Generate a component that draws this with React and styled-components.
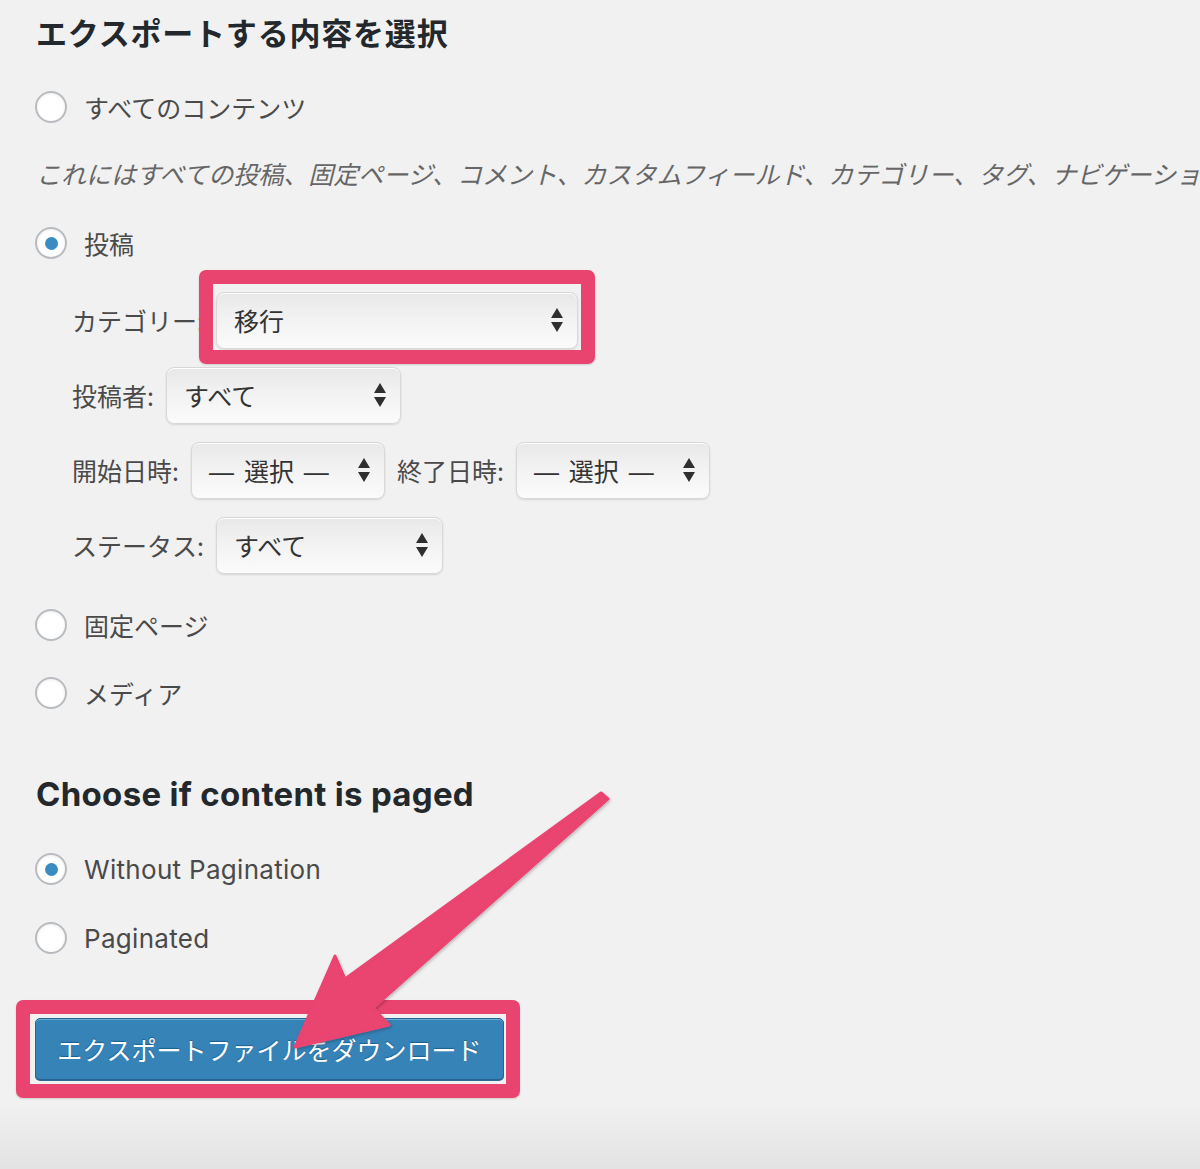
import React from "react";
import styled, { createGlobalStyle } from "styled-components";

const Global = createGlobalStyle`
  html, body { margin: 0; padding: 0; }
  body { background: #f1f1f1; }
`;

const CJK = `"Noto Sans CJK JP", "Noto Sans", sans-serif`;
const LATIN = `Inter, "Noto Sans CJK JP", sans-serif`;

const Page = styled.div`
  position: relative;
  box-sizing: border-box;
  min-height: 1169px;
  width: 1200px;
  overflow: hidden;
  padding: 12px 0 0 35px;
  background: linear-gradient(to bottom, #f1f1f1 0, #f1f1f1 1105px, #e3e3e3 1169px);
  font-family: ${CJK};
  color: #444;
`;

const Title = styled.h2`
  margin: 0 0 0 1px;
  font-family: ${(p) => (p.$latin ? LATIN : CJK)};
  font-size: ${(p) => (p.$latin ? 33 : 31)}px;
  line-height: 40px;
  height: 40px;
  font-weight: 700;
  color: #23282d;
  margin-top: ${(p) => p.$mt || 0}px;
  letter-spacing: ${(p) => (p.$latin ? "0.3px" : "0.8px")};
`;

const RadioRow = styled.label`
  display: flex;
  align-items: center;
  gap: 17px;
  height: 40px;
  margin-top: ${(p) => p.$mt}px;
  font-family: ${(p) => (p.$latin ? LATIN : CJK)};
  font-size: ${(p) => (p.$latin ? 26 : 25)}px;
  letter-spacing: ${(p) => (p.$latin ? "0.3px" : "0")};
  color: #4a4a4a;
`;

const Radio = styled.span`
  box-sizing: border-box;
  width: 32px;
  height: 32px;
  flex: none;
  border-radius: 50%;
  border: 2px solid #b8bcc0;
  background: #fff;
  box-shadow: inset 0 1px 3px rgba(0, 0, 0, 0.08);
  display: flex;
  align-items: center;
  justify-content: center;
  &::after {
    content: "";
    width: 13px;
    height: 13px;
    border-radius: 50%;
    background: #3a8bc2;
    display: ${(p) => (p.$checked ? "block" : "none")};
  }
`;

const Desc = styled.p`
  margin: 26px 0 0 1px;
  height: 40px;
  line-height: 40px;
  font-size: 25px;
  font-style: italic;
  color: #666;
  white-space: nowrap;
`;

const FilterList = styled.div`
  display: flex;
  flex-direction: column;
  gap: 17px;
  margin: 28px 0 0 37px;
`;

const FilterRow = styled.div`
  display: flex;
  align-items: center;
  gap: 12px;
  height: 58px;
`;

const FilterLabel = styled.span`
  font-size: 25px;
  color: #4a4a4a;
  white-space: nowrap;
`;

const Highlight = styled.div`
  position: relative;
  display: inline-flex;
  &::after {
    content: "";
    position: absolute;
    top: ${(p) => p.$t}px;
    bottom: ${(p) => p.$b}px;
    left: ${(p) => p.$l}px;
    right: ${(p) => p.$r}px;
    border: 14px solid #e9446f;
    border-radius: 7px;
    box-shadow: 0 1px 2px rgba(0, 0, 0, 0.15);
    pointer-events: none;
  }
`;

const SelectBox = styled.div`
  box-sizing: border-box;
  width: ${(p) => p.$w}px;
  height: 57px;
  display: flex;
  align-items: center;
  justify-content: space-between;
  padding: 0 14px 0 17px;
  border: 1px solid #d8d8d8;
  border-radius: 8px;
  background: linear-gradient(to bottom, #e8e8e8 0%, #f2f2f2 45%, #fbfbfb 100%);
  box-shadow: 0 1px 2px rgba(0, 0, 0, 0.12), inset 0 1px 0 #fff;
  font-family: "Liberation Sans", "Noto Sans CJK JP", sans-serif;
  font-size: 25px;
  word-spacing: 3px;
  color: #333;
  white-space: nowrap;
`;

const Arrows = () => (
  <svg width="12" height="24" viewBox="0 0 12 24" aria-hidden="true">
    <polygon points="0,10 6,0 12,10" fill="#2f2f2f" />
    <polygon points="0,14 12,14 6,24" fill="#2f2f2f" />
  </svg>
);

const Select = ({ w, value }) => (
  <SelectBox $w={w}>
    <span>{value}</span>
    <Arrows />
  </SelectBox>
);

const ButtonWrap = styled.div`
  margin-top: 60px;
  display: flex;
`;

const Button = styled.button`
  box-sizing: border-box;
  width: 469px;
  height: 62px;
  border: 1px solid #27648f;
  border-radius: 5px;
  background: #3683b8;
  box-shadow: inset 0 1px 0 rgba(140, 200, 235, 0.6), 0 1px 0 #2a6a96;
  color: #fff;
  font-family: ${CJK};
  font-size: 25px;
  text-shadow: 0 -1px 1px rgba(0, 60, 100, 0.5);
  padding: 0;
  cursor: pointer;
`;

const ArrowLayer = styled.svg`
  position: absolute;
  left: 0;
  top: 0;
  pointer-events: none;
`;

export default function App() {
  return (
    <Page>
      <Global />
      <Title>エクスポートする内容を選択</Title>

      <RadioRow $mt={35}>
        <Radio />
        すべてのコンテンツ
      </RadioRow>
      <Desc>
        これにはすべての投稿、固定ページ、コメント、カスタムフィールド、カテゴリー、タグ、ナビゲーションメニュー、カスタム投稿が含まれます。
      </Desc>

      <RadioRow $mt={30}>
        <Radio $checked />
        投稿
      </RadioRow>

      <FilterList>
        <FilterRow>
          <FilterLabel>カテゴリー:</FilterLabel>
          <Highlight $t={-22} $b={-15} $l={-17} $r={-17}>
            <Select w={362} value="移行" />
          </Highlight>
        </FilterRow>
        <FilterRow>
          <FilterLabel>投稿者:</FilterLabel>
          <Select w={235} value="すべて" />
        </FilterRow>
        <FilterRow>
          <FilterLabel>開始日時:</FilterLabel>
          <Select w={194} value="— 選択 —" />
          <FilterLabel>終了日時:</FilterLabel>
          <Select w={194} value="— 選択 —" />
        </FilterRow>
        <FilterRow>
          <FilterLabel>ステータス:</FilterLabel>
          <Select w={227} value="すべて" />
        </FilterRow>
      </FilterList>

      <RadioRow $mt={31}>
        <Radio />
        固定ページ
      </RadioRow>
      <RadioRow $mt={28}>
        <Radio />
        メディア
      </RadioRow>

      <Title $latin $mt={61}>Choose if content is paged</Title>

      <RadioRow $latin $mt={35}>
        <Radio $checked />
        Without Pagination
      </RadioRow>
      <RadioRow $latin $mt={29}>
        <Radio />
        Paginated
      </RadioRow>

      <ButtonWrap>
        <Highlight $t={-18} $b={-18} $l={-19} $r={-16}>
          <Button>エクスポートファイルをダウンロード</Button>
        </Highlight>
      </ButtonWrap>

      <ArrowLayer width="1200" height="1169" viewBox="0 0 1200 1169">
        <defs>
          <filter id="ash" x="-10%" y="-10%" width="130%" height="130%">
            <feDropShadow dx="1" dy="1.5" stdDeviation="1.5" floodColor="#000" floodOpacity="0.25" />
          </filter>
        </defs>
        <polygon
          points="601,793 608,799 373,1008 389,1025 295,1047 335,956 345,979"
          fill="#e9446f"
          stroke="#e9446f"
          strokeWidth="3"
          strokeLinejoin="round"
          filter="url(#ash)"
        />
      </ArrowLayer>
    </Page>
  );
}
